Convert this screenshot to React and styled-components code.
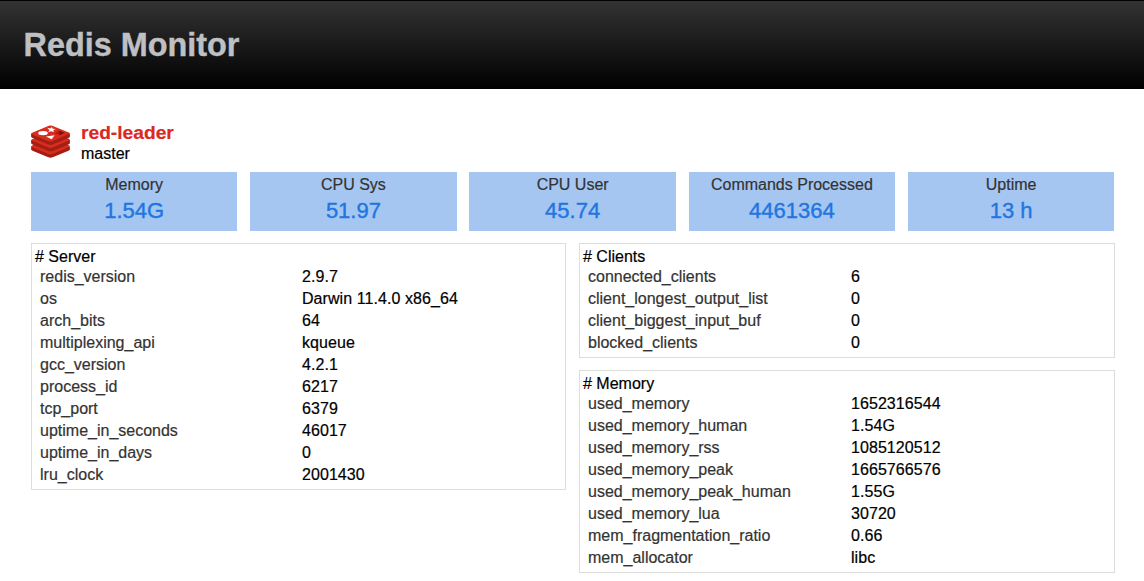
import React from 'react';
import styled, { createGlobalStyle } from 'styled-components';

const GlobalStyle = createGlobalStyle`
  body {
    margin: 0;
    background: #fff;
    color: #000;
    font-family: "Liberation Sans", Helvetica, Arial, sans-serif;
    font-size: 16px;
    overflow: hidden;
    -webkit-text-stroke-width: 0.2px;
  }
`;

const Header = styled.header`
  box-sizing: border-box;
  height: 89px;
  padding: 0 23.5px;
  border-top: 1px solid #000;
  background: linear-gradient(#333, #000);
`;

const Title = styled.h1`
  margin: 0;
  color: #bfc0c4;
  font-size: 32.4px;
  line-height: 88px;
  -webkit-text-stroke-width: 0.4px;
`;

const Main = styled.main`
  width: 1084px;
  padding: 33px 0 0 31px;
`;

const Instance = styled.div`
  display: flex;
  gap: 10px;
  height: 50px;
`;

const Logo = styled.svg`
  flex: none;
  width: 40px;
  height: 34px;
  margin-top: 3px;
`;

const Name = styled.div`
  color: #dc281e;
  font-size: 19.2px;
  font-weight: bold;
  line-height: 22px;
`;

const Role = styled.div`
  line-height: 20px;
`;

const Stats = styled.div`
  display: grid;
  grid-template-columns: repeat(5, 1fr);
  gap: 12.9px;
  width: 1083.3px;
`;

const Stat = styled.div`
  height: 56px;
  padding-top: 3px;
  background: #a6c6f2;
  text-align: center;
`;

const StatLabel = styled.div`
  color: #333;
  line-height: 20px;
`;

const StatValue = styled.div`
  color: #1f76e0;
  font-size: 22px;
  line-height: 32px;
  -webkit-text-stroke-width: 0.4px;
`;

const Columns = styled.div`
  display: grid;
  grid-template-columns: 535px 536px;
  column-gap: 13px;
  align-items: start;
  margin-top: 12px;
`;

const Column = styled.div`
  display: flex;
  flex-direction: column;
  gap: 12px;
`;

const Panel = styled.section`
  padding: 3px;
  border: 1px solid #ddd;
`;

const PanelTitle = styled.div`
  line-height: 19px;
`;

const Row = styled.div`
  display: grid;
  grid-template-columns: ${(p) => p.$labelWidth}px 1fr;
  padding-left: 5px;
  line-height: 22px;
`;

const Key = styled.span`
  color: #333;
`;

const Value = styled.span`
  letter-spacing: 0.07px;
`;

const stats = [
  ['Memory', '1.54G'],
  ['CPU Sys', '51.97'],
  ['CPU User', '45.74'],
  ['Commands Processed', '4461364'],
  ['Uptime', '13 h'],
];

const server = [
  ['redis_version', '2.9.7'],
  ['os', 'Darwin 11.4.0 x86_64'],
  ['arch_bits', '64'],
  ['multiplexing_api', 'kqueue'],
  ['gcc_version', '4.2.1'],
  ['process_id', '6217'],
  ['tcp_port', '6379'],
  ['uptime_in_seconds', '46017'],
  ['uptime_in_days', '0'],
  ['lru_clock', '2001430'],
];

const clients = [
  ['connected_clients', '6'],
  ['client_longest_output_list', '0'],
  ['client_biggest_input_buf', '0'],
  ['blocked_clients', '0'],
];

const memory = [
  ['used_memory', '1652316544'],
  ['used_memory_human', '1.54G'],
  ['used_memory_rss', '1085120512'],
  ['used_memory_peak', '1665766576'],
  ['used_memory_peak_human', '1.55G'],
  ['used_memory_lua', '30720'],
  ['mem_fragmentation_ratio', '0.66'],
  ['mem_allocator', 'libc'],
];

function InfoPanel({ title, rows, labelWidth }) {
  return (
    <Panel>
      <PanelTitle># {title}</PanelTitle>
      {rows.map(([key, value]) => (
        <Row key={key} $labelWidth={labelWidth}>
          <Key>{key}</Key>
          <Value>{value}</Value>
        </Row>
      ))}
    </Panel>
  );
}

const SLAB = 'M0.1 8.6 V11.8 Q0.2 12.4 1.5 13 L17.3 19.5 Q19.5 20.4 21.7 19.5 L37.5 13 Q38.9 12.4 38.9 11.8 V8.6 Z';
const TOP = 'M1.2 7.8 L17.8 0.8 Q19.5 0.1 21.2 0.8 L37.8 7.4 Q39.8 8.2 37.8 9.1 L21.5 16.2 Q19.5 17 17.5 16.2 L1.2 9.4 Q-0.6 8.6 1.2 7.8 Z';

function RedisLogo() {
  return (
    <Logo viewBox="0 0 40 34">
      {[12.8, 6.4, 0].map((y) => (
        <g key={y} transform={`translate(0 ${y})`}>
          <path d={SLAB} fill="#a41e11" />
          <path d={TOP} fill="#d82c20" />
        </g>
      ))}
      <ellipse cx="12" cy="8.1" rx="4.8" ry="2.2" fill="#fff" />
      <path d="M15 11.4 L23.6 10.2 L20.6 14.2 Z" fill="#fff" />
      <path d="M16.2 2.8 L19.4 3.6 L21 2 L21.6 3.8 L24.8 4.1 L22.2 5.3 L23 7.2 L20.2 6.2 L17 7.1 L18.5 5.2 Z" fill="#fff" />
      <path d="M28.2 5.6 L33.6 7.9 L28.2 10.2 Z" fill="#7a0c00" />
      <path d="M28.2 5.6 V10.2 L23.4 7.9 Z" fill="#ad2115" />
    </Logo>
  );
}

export default function App() {
  return (
    <>
      <GlobalStyle />
      <Header>
        <Title>Redis Monitor</Title>
      </Header>
      <Main>
        <Instance>
          <RedisLogo />
          <div>
            <Name>red-leader</Name>
            <Role>master</Role>
          </div>
        </Instance>
        <Stats>
          {stats.map(([label, value]) => (
            <Stat key={label}>
              <StatLabel>{label}</StatLabel>
              <StatValue>{value}</StatValue>
            </Stat>
          ))}
        </Stats>
        <Columns>
          <InfoPanel title="Server" rows={server} labelWidth={262} />
          <Column>
            <InfoPanel title="Clients" rows={clients} labelWidth={263} />
            <InfoPanel title="Memory" rows={memory} labelWidth={263} />
          </Column>
        </Columns>
      </Main>
    </>
  );
}
